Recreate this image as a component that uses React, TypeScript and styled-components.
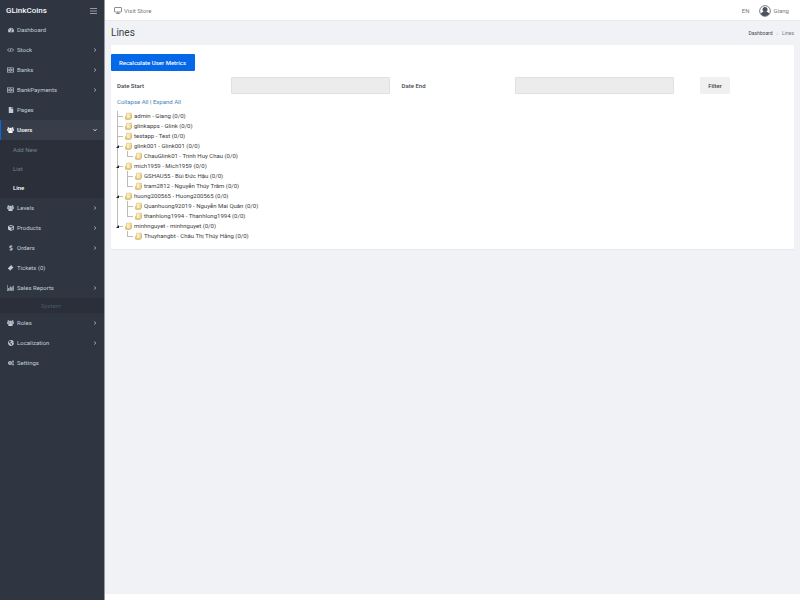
import React, { useState } from 'react';
import styled, { createGlobalStyle, css } from 'styled-components';
import {
  FaTachometerAlt, FaFile, FaCube, FaDollarSign, FaGlobeAmericas, FaCogs,
} from 'react-icons/fa';

const GlobalStyle = createGlobalStyle`
  * { box-sizing: border-box; }
  body {
    margin: 0;
    background: #fff;
    color: #575757;
    font: 400 6px/10px Roboto, "Liberation Sans", sans-serif;
  }
  ul, ol { list-style: none; margin: 0; padding: 0; }
  a { color: inherit; text-decoration: none; }
  button { font: inherit; color: inherit; border: 0; padding: 0; background: none; cursor: pointer; }
  svg { display: block; flex: none; }
`;

const Page = styled.div`
  display: flex;
  min-height: 100vh;
`;

const Sidebar = styled.aside`
  flex: none;
  width: 105px;
  background: #2f3541;
  border-right: 1px solid #9599a1;
  color: #c0ced4;
`;

const SidebarHeader = styled.div`
  display: flex;
  align-items: center;
  justify-content: space-between;
  height: 20px;
  padding: 1px 7px 0 6px;
`;

const Brand = styled.a`
  color: #f5f6f8;
  font-size: 8px;
  font-weight: 500;
`;

const MenuButton = styled.button`
  color: #aeb4bd;
`;

const NavLink = styled.a<{ $active?: boolean }>`
  display: flex;
  align-items: center;
  height: 20px;
  padding: 0 7px 0 6px;
  border-left: 1px solid transparent;
  ${(p) => p.$active && css`
    background: #373d49;
    border-left-color: #0568e8;
    color: #fff;
    font-weight: 500;
  `}
`;

const NavIcon = styled.span`
  display: flex;
  justify-content: center;
  width: 7px;
  margin-right: 3px;
`;

const NavLabel = styled.span`
  flex: 1;
`;

const SubMenu = styled.ul`
  padding-bottom: 1px;
  background: #2a2f3a;
`;

const SubLink = styled.a<{ $active?: boolean }>`
  display: block;
  padding-left: 13px;
  line-height: 19px;
  color: ${(p) => (p.$active ? '#fff' : '#71868f')};
  font-weight: ${(p) => (p.$active ? 500 : 400)};
`;

const NavSection = styled.li`
  background: #2a2f3a;
  color: #455b66;
  line-height: 15px;
  padding-left: 41px;
`;

const Content = styled.div`
  display: flex;
  flex: 1;
  flex-direction: column;
  min-width: 0;
`;

const TopBar = styled.header`
  display: flex;
  align-items: center;
  height: 21px;
  padding: 1px 11px 0 9px;
  border-bottom: 1px solid #e8eaee;
  color: #777b82;
`;

const StoreLink = styled.a`
  display: flex;
  align-items: center;
  gap: 2px;
  margin-right: auto;
`;

const UserLink = styled.a`
  display: flex;
  align-items: center;
  gap: 3px;
  margin-left: 9px;
`;

const Main = styled.main`
  flex: 1;
  padding: 0 6px;
  background: #f0f2f6;
`;

const TitleBar = styled.div`
  display: flex;
  align-items: center;
  justify-content: space-between;
  height: 24px;
`;

const Title = styled.h1`
  margin: 0;
  color: #3c4046;
  font-size: 10px;
  line-height: 12px;
  font-weight: 400;
`;

const Breadcrumb = styled.ol`
  display: flex;
  gap: 4px;
  color: #777b82;
  font-size: 5px;

  a { color: #44484f; }
`;

const Separator = styled.li`
  color: #b0b4ba;
`;

const Card = styled.section`
  padding: 9px 0 8px;
  border-radius: 1px;
  background: #fff;
  box-shadow: 0 1px 1px #e4e7ec;
`;

const PrimaryButton = styled.button`
  height: 17px;
  padding: 0 9px 0 8px;
  border-radius: 1px;
  background: #0568e8;
  color: #fff;
  font-weight: 500;
`;

const FilterForm = styled.form`
  display: grid;
  grid-template-columns: 2fr 3fr 2fr 3fr 2fr;
  align-items: center;
  margin-top: 6px;
`;

const Label = styled.label`
  padding-left: 6px;
  color: #44484d;
  font-weight: 500;
`;

const DateInput = styled.input`
  height: 17px;
  min-width: 0;
  margin: 0 6px;
  padding: 0 4px;
  border: 1px solid #e0e0e0;
  border-radius: 1px;
  background: #ececec;
  font: inherit;
`;

const FilterButton = styled.button`
  justify-self: start;
  height: 17px;
  margin-left: 20px;
  padding: 0 8px;
  border-radius: 1px;
  background: #f0f0f0;
  color: #44484d;
  font-weight: 500;
`;

const TreeActions = styled.div`
  padding: 3px 6px 4px;

  button { color: #4286be; }
`;

const Tree = styled.ul`
  padding-left: 5px;
`;

const Branch = styled.ul`
  padding-left: 10px;
`;

const TreeItem = styled.li`
  background:
    linear-gradient(#bbb, #bbb) 1px 0 / 1px 100% no-repeat,
    linear-gradient(#bbb, #bbb) 1px 5px / 6px 1px no-repeat;

  &:last-child {
    background:
      linear-gradient(#bbb, #bbb) 1px 0 / 1px 5px no-repeat,
      linear-gradient(#bbb, #bbb) 1px 5px / 6px 1px no-repeat;
  }
`;

const TreeRow = styled.div`
  display: flex;
  align-items: center;
  height: 10px;
  color: #3c3c3c;
`;

const Toggle = styled.button`
  display: flex;
  align-items: center;
  width: 9px;
  height: 10px;
`;

const NodeLink = styled.a`
  display: flex;
  align-items: center;
  gap: 2px;
  white-space: nowrap;
`;

const Footer = styled.footer`
  height: 6px;
  background: #fff;
`;

const Chevron = ({ down }: { down?: boolean }) => (
  <svg width="4" height="4" viewBox="0 0 4 4" fill="none" stroke="currentColor" strokeWidth="0.8">
    <path d={down ? 'M0.5 1.2 2 2.8 3.5 1.2' : 'M1.2 0.5 2.8 2 1.2 3.5'} />
  </svg>
);

const FolderIcon = () => (
  <svg width="7" height="8" viewBox="0 0 14 16">
    <path d="M3 2h10v10l-2.500 2.500H2z" fill="#ecd594" stroke="#d9be78" strokeWidth="0.800" />
    <path d="M4 3h5v9H4z" fill="#f9ecc0" />
    <path d="M0 9l3-2v7H0z" fill="#e2c57c" />
    <path d="M1 14.500h9l3-2.500V6" fill="none" stroke="#c6a35a" strokeWidth="1.200" />
  </svg>
);

const MonitorIcon = () => (
  <svg width="8" height="7" viewBox="0 0 16 14" fill="none" stroke="#666a70" strokeWidth="1.5">
    <rect x="1" y="1" width="14" height="9" rx="1" />
    <path d="M8 10v3M4.500 13h7" />
  </svg>
);

const AvatarIcon = () => (
  <svg width="12" height="12" viewBox="0 0 24 24">
    <circle cx="12" cy="12" r="10.700" fill="#fff" stroke="#4c515c" strokeWidth="1.500" />
    <circle cx="12" cy="9" r="5" fill="#4c515c" />
    <path d="M3.500 18c1-3 4-4 5.500-4.500h6C17 14 19.500 15 20.500 18c-2 2.500-5 4-8.500 4s-6.500-1.500-8.500-4z" fill="#4c515c" />
  </svg>
);

interface IconProps {
  size?: number;
}

const CodeIcon = () => (
  <svg width="7" height="6" viewBox="0 0 14 12" fill="none" stroke="currentColor" strokeWidth="1.600">
    <path d="M4.500 2.500 1 6l3.500 3.500M9.500 2.500 13 6 9.500 9.500M8 2.500l-2 7" />
  </svg>
);

const MoneyIcon = () => (
  <svg width="7" height="6" viewBox="0 0 14 12" fill="none" stroke="currentColor" strokeWidth="1.300">
    <rect x="0.700" y="1.700" width="12.600" height="8.600" />
    <ellipse cx="7" cy="6" rx="2.200" ry="2.800" />
    <path d="M7 4.500v3M2.500 4v4M11.500 4v4" />
  </svg>
);

const GroupIcon = () => (
  <svg width="7" height="6" viewBox="0 0 14 12" fill="currentColor">
    <circle cx="2.800" cy="2.200" r="1.900" />
    <circle cx="11.200" cy="2.200" r="1.900" />
    <path d="M0 4.500h4.500v3H0zM9.500 4.500H14v3H9.500z" />
    <circle cx="7" cy="4.200" r="2.700" />
    <path d="M2.500 10.500c0-2.500 1-4 2.500-4h4c1.500 0 2.500 1.500 2.500 4 0 1-.8 1.500-1.700 1.500H4.200c-.9 0-1.700-.5-1.700-1.500z" />
  </svg>
);

const TicketIcon = () => (
  <svg width="7" height="6" viewBox="0 0 14 13">
    <path d="M8.500 0 10 1.500a1.500 1.500 0 0 0 2 2L13.500 5 6 12.500 4.500 11a1.500 1.500 0 0 0-2-2L1 7.500z" fill="currentColor" />
  </svg>
);

const BarsIcon = () => (
  <svg width="7" height="6" viewBox="0 0 14 12" fill="currentColor">
    <path d="M0 0h1v11h13v1H0zM2.500 6h2v4h-2zM5.500 3h2v7h-2zM8.500 4.500h2v5.500h-2zM11.300 1.500h2V10h-2z" />
  </svg>
);

interface NavEntry {
  label: string;
  icon?: React.ComponentType<IconProps>;
  expandable?: boolean;
  children?: string[];
  section?: boolean;
}

const navEntries: NavEntry[] = [
  { label: 'Dashboard', icon: FaTachometerAlt },
  { label: 'Stock', icon: CodeIcon, expandable: true },
  { label: 'Banks', icon: MoneyIcon, expandable: true },
  { label: 'BankPayments', icon: MoneyIcon, expandable: true },
  { label: 'Pages', icon: FaFile },
  { label: 'Users', icon: GroupIcon, expandable: true, children: ['Add New', 'List', 'Line'] },
  { label: 'Levels', icon: GroupIcon, expandable: true },
  { label: 'Products', icon: FaCube, expandable: true },
  { label: 'Orders', icon: FaDollarSign, expandable: true },
  { label: 'Tickets (0)', icon: TicketIcon },
  { label: 'Sales Reports', icon: BarsIcon, expandable: true },
  { label: 'System', section: true },
  { label: 'Roles', icon: GroupIcon, expandable: true },
  { label: 'Localization', icon: FaGlobeAmericas, expandable: true },
  { label: 'Settings', icon: FaCogs },
];

interface TreeNode {
  label: string;
  children?: TreeNode[];
}

const treeNodes: TreeNode[] = [
  { label: 'admin - Giang (0/0)' },
  { label: 'glinkapps - Glink (0/0)' },
  { label: 'testapp - Test (0/0)' },
  { label: 'glink001 - Glink001 (0/0)', children: [{ label: 'ChauGlink01 - Trinh Huy Chau (0/0)' }] },
  {
    label: 'mich1959 - Mich1959 (0/0)',
    children: [{ label: 'GSHAU55 - Bùi Đức Hậu (0/0)' }, { label: 'tram2812 - Nguyễn Thúy Trâm (0/0)' }],
  },
  {
    label: 'huong200565 - Huong200565 (0/0)',
    children: [
      { label: 'Quanhuong92019 - Nguyễn Mai Quân (0/0)' },
      { label: 'thanhlong1994 - Thanhlong1994 (0/0)' },
    ],
  },
  { label: 'minhnguyet - minhnguyet (0/0)', children: [{ label: 'Thuyhangbt - Châu Thị Thúy Hằng (0/0)' }] },
];

const parentLabels = treeNodes.filter((n) => n.children).map((n) => n.label);

export default function App() {
  const [open, setOpen] = useState<string[]>(parentLabels);

  const toggle = (label: string) =>
    setOpen((cur) => (cur.includes(label) ? cur.filter((l) => l !== label) : [...cur, label]));

  const renderNode = (node: TreeNode) => {
    const expanded = open.includes(node.label);
    return (
      <TreeItem key={node.label}>
        <TreeRow>
          <Toggle
            as={node.children ? 'button' : 'span'}
            aria-label={node.children ? `Toggle ${node.label}` : undefined}
            onClick={node.children ? () => toggle(node.label) : undefined}
          >
            {node.children && (
              <svg width="3" height="3" viewBox="0 0 3 3">
                <path d={expanded ? 'M3 0v3H0z' : 'M0 0l3 1.500L0 3z'} fill="#222" />
              </svg>
            )}
          </Toggle>
          <NodeLink href="#">
            <FolderIcon />
            {node.label}
          </NodeLink>
        </TreeRow>
        {node.children && expanded && <Branch>{node.children.map(renderNode)}</Branch>}
      </TreeItem>
    );
  };

  return (
    <Page>
      <GlobalStyle />
      <Sidebar>
        <SidebarHeader>
          <Brand href="#">GLinkCoins</Brand>
          <MenuButton aria-label="Toggle menu">
            <svg width="7" height="6" viewBox="0 0 7 6" stroke="currentColor" strokeWidth="0.8">
              <path d="M0 0.500h7M0 3h7M0 5.500h7" />
            </svg>
          </MenuButton>
        </SidebarHeader>
        <nav>
          <ul>
            {navEntries.map(({ label, icon: Icon, expandable, children, section }) =>
              section ? (
                <NavSection key={label}>{label}</NavSection>
              ) : (
                <li key={label}>
                  <NavLink href="#" $active={!!children}>
                    <NavIcon>{Icon && <Icon size={6} />}</NavIcon>
                    <NavLabel>{label}</NavLabel>
                    {expandable && <Chevron down={!!children} />}
                  </NavLink>
                  {children && (
                    <SubMenu>
                      {children.map((child) => (
                        <li key={child}>
                          <SubLink href="#" $active={child === 'Line'}>{child}</SubLink>
                        </li>
                      ))}
                    </SubMenu>
                  )}
                </li>
              ),
            )}
          </ul>
        </nav>
      </Sidebar>
      <Content>
        <TopBar>
          <StoreLink href="#"><MonitorIcon />Visit Store</StoreLink>
          <a href="#">EN</a>
          <UserLink href="#"><AvatarIcon />Giang</UserLink>
        </TopBar>
        <Main>
          <TitleBar>
            <Title>Lines</Title>
            <Breadcrumb>
              <li><a href="#">Dashboard</a></li>
              <Separator>›</Separator>
              <li>Lines</li>
            </Breadcrumb>
          </TitleBar>
          <Card>
            <PrimaryButton>Recalculate User Metrics</PrimaryButton>
            <FilterForm onSubmit={(e) => e.preventDefault()}>
              <Label htmlFor="date-start">Date Start</Label>
              <DateInput id="date-start" readOnly />
              <Label htmlFor="date-end">Date End</Label>
              <DateInput id="date-end" readOnly />
              <FilterButton type="submit">Filter</FilterButton>
            </FilterForm>
            <TreeActions>
              <button onClick={() => setOpen([])}>Collapse All</button>
              {' | '}
              <button onClick={() => setOpen(parentLabels)}>Expand All</button>
            </TreeActions>
            <Tree>{treeNodes.map(renderNode)}</Tree>
          </Card>
        </Main>
        <Footer />
      </Content>
    </Page>
  );
}
